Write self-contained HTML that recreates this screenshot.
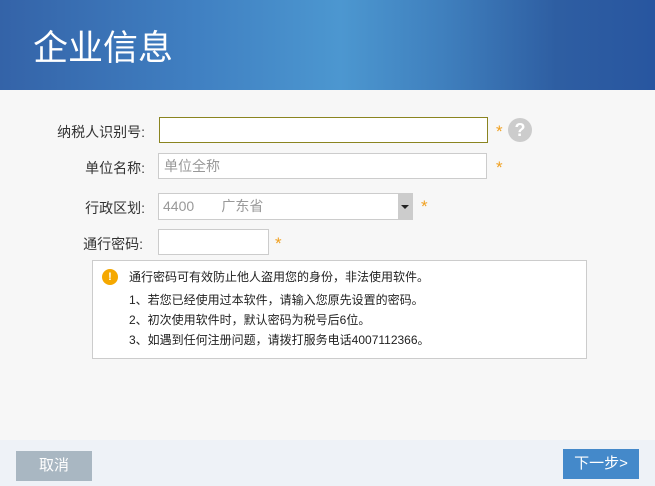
<!DOCTYPE html>
<html><head><meta charset="utf-8"><style>
*{margin:0;padding:0;box-sizing:border-box}
body{width:655px;height:486px;overflow:hidden;background:#f7f7f7;font-family:"Liberation Sans","Noto Sans CJK SC",sans-serif;position:relative;font-size:13px;color:#333}
.hd{position:absolute;left:0;top:0;width:655px;height:90px;background:linear-gradient(90deg,#3463a8 0%,#4080c2 30%,#4c97d0 52%,#3f7fbd 68%,#2e5ea2 85%,#2856a0 100%)}
.hd h1{position:absolute;left:33px;top:24px;font-weight:normal;color:#fff;font-size:35px;line-height:44px;font-family:"Noto Sans CJK SC",sans-serif}
.lb{position:absolute;width:100px;text-align:right;font-size:14px;color:#333;line-height:20px}
.in{position:absolute;background:#fff;border:1px solid #ccc}
.st{position:absolute;color:#f0a020;font-size:17px}
.ph{position:absolute;color:#999;font-size:14px;line-height:20px}
.box{position:absolute;left:92px;top:260px;width:495px;height:99px;background:#fff;border:1px solid #ccc;font-size:12px;color:#222}
.box p{position:absolute;left:36px;line-height:16px}
.ft{position:absolute;left:0;top:440px;width:655px;height:46px;background:#eef2f7}
.btn{position:absolute;color:#fff;font-size:15px;text-align:center;line-height:30px}
</style></head><body>
<div class="hd"><h1>企业信息</h1></div>

<div class="lb" style="left:45px;top:122px">纳税人识别号:</div>
<div class="in" style="left:159px;top:117px;width:329px;height:26px;border-color:#8a8420"></div>
<div class="st" style="left:496px;top:122px">*</div>
<div style="position:absolute;left:508px;top:118px;width:24px;height:24px;border-radius:50%;background:#ccc;color:#fff;font-weight:bold;font-size:18px;text-align:center;line-height:24px">?</div>

<div class="lb" style="left:45px;top:158px">单位名称:</div>
<div class="in" style="left:158px;top:153px;width:329px;height:26px"></div>
<div class="ph" style="left:164px;top:156px">单位全称</div>
<div class="st" style="left:496px;top:158px">*</div>

<div class="lb" style="left:45px;top:198px">行政区划:</div>
<div class="in" style="left:158px;top:193px;width:255px;height:27px"></div>
<div style="position:absolute;left:398px;top:194px;width:14px;height:25px;background:#ccc"></div>
<div style="position:absolute;left:401px;top:205px;border-left:4px solid transparent;border-right:4px solid transparent;border-top:4px solid #222"></div>
<div class="ph" style="left:163px;top:196px">4400&nbsp;&nbsp;&nbsp;&nbsp;&nbsp;&nbsp;&nbsp;广东省</div>
<div class="st" style="left:421px;top:197px">*</div>

<div class="lb" style="left:43px;top:234px">通行密码:</div>
<div class="in" style="left:158px;top:229px;width:111px;height:26px"></div>
<div class="st" style="left:275px;top:234px">*</div>

<div class="box">
<div style="position:absolute;left:9px;top:8px;width:16px;height:16px;border-radius:50%;background:#f5a800;color:#fff;font-size:11px;font-weight:bold;text-align:center;line-height:16px">!</div>
<p style="top:8px">通行密码可有效防止他人盗用您的身份，非法使用软件。</p>
<p style="top:31px">1、若您已经使用过本软件，请输入您原先设置的密码。</p>
<p style="top:51px">2、初次使用软件时，默认密码为税号后6位。</p>
<p style="top:71px">3、如遇到任何注册问题，请拨打服务电话4007112366。</p>
</div>

<div class="ft"></div>
<div class="btn" style="left:16px;top:451px;width:76px;height:30px;background:#a9b7c2">取消</div>
<div class="btn" style="left:563px;top:449px;width:76px;height:30px;background:#4489ca">下一步&gt;</div>
</body></html>
